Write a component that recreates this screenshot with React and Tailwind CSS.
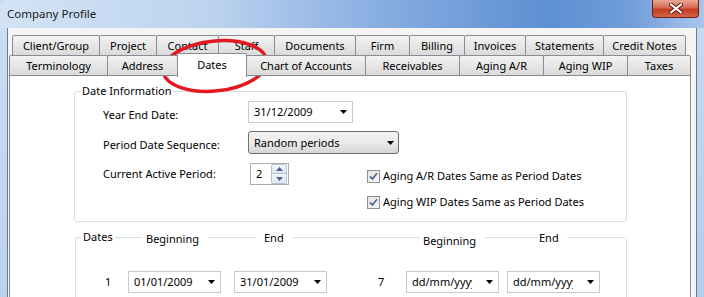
import React from 'react';

const row1 = [
  { label: 'Client/Group', w: 'w-[88px]' },
  { label: 'Project', w: 'w-[58px]' },
  { label: 'Contact', w: 'w-[63px]' },
  { label: 'Staff', w: 'w-[57px]' },
  { label: 'Documents', w: 'w-[82px]' },
  { label: 'Firm', w: 'w-[55px]' },
  { label: 'Billing', w: 'w-[56px]' },
  { label: 'Invoices', w: 'w-[62px]' },
  { label: 'Statements', w: 'w-[79px]' },
  { label: 'Credit Notes', w: 'w-[83px]' },
];

const row2 = [
  { label: 'Terminology', w: 'w-[99px]' },
  { label: 'Address', w: 'w-[71px]' },
  { label: 'Dates', w: 'w-[70px]', selected: true },
  { label: 'Chart of Accounts', w: 'w-[120px]' },
  { label: 'Receivables', w: 'w-[95px]' },
  { label: 'Aging A/R', w: 'w-[85px]' },
  { label: 'Aging WIP', w: 'w-[85px]' },
  { label: 'Taxes', w: 'w-[64px]' },
];

const Tab = ({ label, w, selected }) =>
  selected ? (
    <div className={`${w} relative -top-[2px] z-20 -ml-px h-[24px] flex items-start justify-center pt-[3px] border border-b-0 border-[#898c95] rounded-t-[2px] bg-white`}>
      {label}
    </div>
  ) : (
    <div className={`${w} -ml-px first:ml-0 h-full flex items-center justify-center border border-[#898c95] rounded-t-[2px] bg-gradient-to-b from-[#f3f3f3] to-[#dadada]`}>
      {label}
    </div>
  );

const Arrow = () => (
  <svg width="7" height="4" viewBox="0 0 7 4" className="shrink-0">
    <path d="M0 0h7L3.5 4z" fill="#000" />
  </svg>
);

const DateCombo = ({ value, w, textW = 'w-auto' }) => (
  <div className={`${w} h-[22px] flex items-center justify-between pl-[5px] pr-[5px] border border-[#c7c9cc] bg-white`}>
    <span className={`${textW} overflow-hidden whitespace-nowrap`}>{value}</span>
    <Arrow />
  </div>
);

const Check = ({ label }) => (
  <div className="flex items-center h-[16px]">
    <div className="w-[13px] h-[13px] border border-[#8e8f8f] bg-gradient-to-br from-[#e4e4e4] to-[#f7f7f7] flex items-center justify-center">
      <svg width="9" height="9" viewBox="0 0 9 9">
        <path d="M1 4.5l2.5 2.5L8 1.2" fill="none" stroke="#556a92" strokeWidth="1.8" />
      </svg>
    </div>
    <span className="ml-[3px]">{label}</span>
  </div>
);

export default function App() {
  return (
    <div className="relative w-[704px] h-[297px] overflow-hidden flex flex-col bg-[#c6dbf2] text-[11px] leading-[16px] text-black font-['Noto_Sans',sans-serif]">
      {/* Title bar */}
      <div className="relative h-[28px] shrink-0 flex items-center pl-[7px] rounded-tl-[6px] bg-[linear-gradient(90deg,#d3e3f5_0%,#bcd3ef_30%,#86ace0_55%,#5d8fd3_78%,#729edb_90%,#a9c5ea_100%)]">
        <span className="text-[11.5px] text-[#1a1a1a] -mt-[1px]">Company Profile</span>
        <div className="absolute right-[5px] top-0 w-[47px] h-[18px] rounded-b-[4px] border border-t-0 border-[#6b2216] bg-[linear-gradient(180deg,#e9a796_0%,#d66a51_45%,#c2391f_55%,#d46647_100%)] flex items-center justify-center">
          <svg width="14" height="11" viewBox="0 0 14 11">
            <path d="M2 1.5l10 8M12 1.5l-10 8" stroke="#5a1f15" strokeWidth="4" strokeLinecap="round" />
            <path d="M2 1.5l10 8M12 1.5l-10 8" stroke="#ffffff" strokeWidth="2.2" strokeLinecap="round" />
          </svg>
        </div>
      </div>

      <div className="flex flex-1 min-h-0">
        {/* left frame */}
        <div className="w-[8px] shrink-0 bg-gradient-to-b from-[#c9ddf3] to-[#b9d2ef] border-r border-[#6f7884]" />

        {/* client area */}
        <div className="w-[688px] shrink-0 flex flex-col bg-[#f4f4f4] pt-[7px]">
          <div className="flex h-[21px] ml-[4px] shrink-0">
            {row1.map((t) => (
              <Tab key={t.label} {...t} />
            ))}
          </div>
          <div className="relative z-10 flex h-[21px] -mt-px ml-[1px] shrink-0">
            {row2.map((t) => (
              <Tab key={t.label} {...t} />
            ))}
          </div>

          {/* tab page */}
          <div className="-mt-px ml-[1px] w-[682px] flex-1 border border-[#898c95] bg-white pl-[64px] pt-[15px]">
            {/* Date Information */}
            <div className="relative w-[553px] h-[131px] border border-[#d5dfe5] rounded-[3px] pl-[28px] pt-[9px]">
              <span className="absolute left-[6px] -top-[9px] px-[1px] bg-white">Date Information</span>

              <div className="flex">
                <span className="w-[145px] pt-[6px]">Year End Date:</span>
                <DateCombo value="31/12/2009" w="w-[105px]" />
              </div>

              <div className="flex mt-[8px]">
                <span className="w-[145px] pt-[6px]">Period Date Sequence:</span>
                <div className="w-[151px] h-[23px] flex items-center justify-between pl-[5px] pr-[4px] border border-[#707070] rounded-[3px] bg-gradient-to-b from-[#f2f2f2] via-[#ebebeb] to-[#d6d6d6]">
                  <span>Random periods</span>
                  <Arrow />
                </div>
              </div>

              <div className="flex mt-[9px]">
                <span className="w-[147px] pt-[3px]">Current Active Period:</span>
                <div className="w-[39px] h-[22px] flex items-center justify-between pl-[5px] pr-[1px] border border-[#abadb3] bg-white">
                  <span>2</span>
                  <div className="flex flex-col w-[16px] h-[20px]">
                    <div className="h-[10px] border border-[#b3c3d6] rounded-t-[2px] bg-gradient-to-b from-[#f4f7fb] to-[#dfe7f1] flex items-center justify-center">
                      <svg width="7" height="4" viewBox="0 0 7 4">
                        <path d="M0 4h7L3.5 0z" fill="#4d6185" />
                      </svg>
                    </div>
                    <div className="h-[10px] border border-t-0 border-[#b3c3d6] rounded-b-[2px] bg-gradient-to-b from-[#f4f7fb] to-[#dfe7f1] flex items-center justify-center">
                      <svg width="7" height="4" viewBox="0 0 7 4">
                        <path d="M0 0h7L3.5 4z" fill="#4d6185" />
                      </svg>
                    </div>
                  </div>
                </div>
                <div className="ml-[78px] pt-[5px] flex flex-col gap-[10px]">
                  <Check label="Aging A/R Dates Same as Period Dates" />
                  <Check label="Aging WIP Dates Same as Period Dates" />
                </div>
              </div>
            </div>

            {/* Dates */}
            <div className="relative mt-[15px] ml-[1px] w-[552px] h-[80px] border border-[#d5dfe5] rounded-[3px] pt-[33px] pl-[29px]">
              <span className="absolute left-[5px] -top-[9px] px-[2px] bg-white">Dates</span>
              <span className="absolute left-[66px] -top-[7px] w-[66px] pl-[4px] bg-white">Beginning</span>
              <span className="absolute left-[181px] -top-[8px] w-[36px] pl-[7px] bg-white">End</span>
              <span className="absolute left-[344px] -top-[5px] w-[65px] pl-[3px] bg-white">Beginning</span>
              <span className="absolute left-[461px] -top-[8px] w-[30px] pl-[2px] bg-white">End</span>

              <div className="flex items-center">
                <span className="w-[23px]">1</span>
                <DateCombo value="01/01/2009" w="w-[93px]" />
                <div className="ml-[13px]">
                  <DateCombo value="31/01/2009" w="w-[93px]" />
                </div>
                <span className="ml-[51px] w-[28px]">7</span>
                <DateCombo value="dd/mm/yyyy" w="w-[93px]" textW="w-[60px]" />
                <div className="ml-[8px]">
                  <DateCombo value="dd/mm/yyyy" w="w-[93px]" textW="w-[60px]" />
                </div>
              </div>
            </div>
          </div>
        </div>

        {/* right frame */}
        <div className="w-[8px] shrink-0 bg-gradient-to-b from-[#c3d9f2] to-[#b3cdee] border-l border-[#6f7884]" />
      </div>

      {/* red highlight */}
      <svg className="absolute left-0 top-0 pointer-events-none" width="704" height="297">
        <ellipse cx="215" cy="66" rx="52" ry="25" transform="rotate(-6 215 66)" fill="none" stroke="#e3191f" strokeWidth="3.5" />
      </svg>
    </div>
  );
}
